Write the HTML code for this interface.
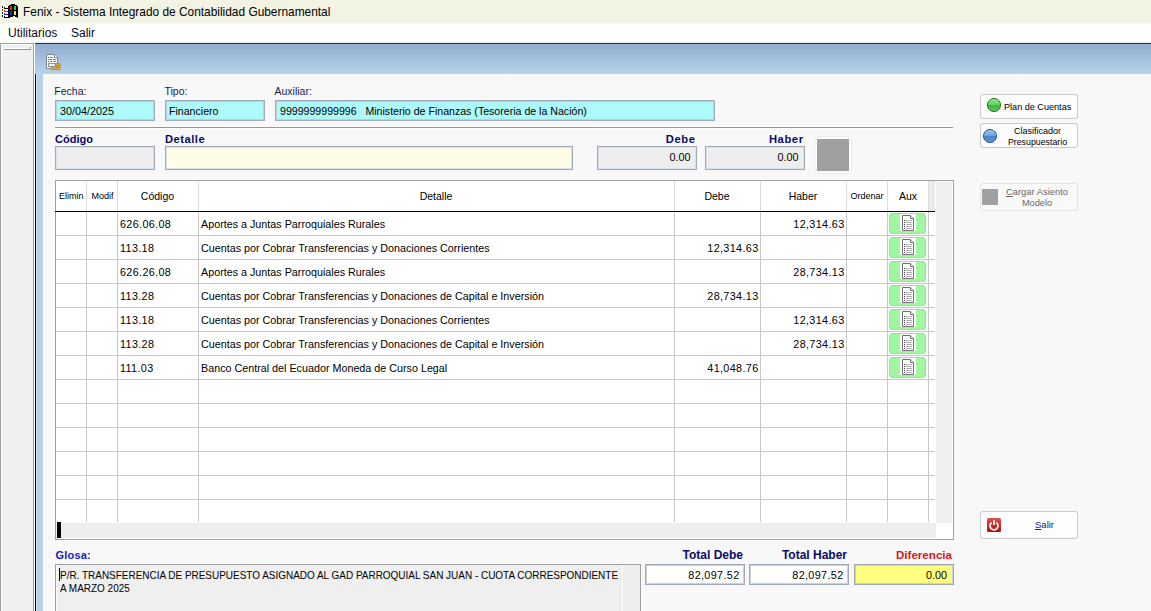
<!DOCTYPE html>
<html><head><meta charset="utf-8">
<style>
html,body{margin:0;padding:0;}
body{width:1151px;height:611px;overflow:hidden;position:relative;background:#F8F8F8;font-family:"Liberation Sans", sans-serif;}
.r{position:absolute;}
.t{position:absolute;white-space:pre;}
</style></head><body>
<div class="r" style="left:0px;top:0px;width:1151px;height:23px;background:#F2F3E3;"></div>
<div class="r" style="left:0px;top:17px;width:1151px;height:1px;background:#F4F5E8;"></div>
<svg class="r" style="left:0px;top:0px" width="22" height="22" viewBox="0 0 22 22" shape-rendering="crispEdges">
<path d="M8 6h1v-1h2v-1h4v1h2v1h1v12h-1v-1h-2v-1h-2v1h-3v1h-2z" fill="#000"/>
<rect x="10" y="6" width="2" height="4" fill="#E02020"/>
<rect x="14" y="6" width="2" height="4" fill="#30D040"/>
<rect x="10" y="11" width="2" height="4" fill="#1020E0"/>
<rect x="14" y="11" width="2" height="4" fill="#F0F040"/>
<rect x="12" y="9" width="2" height="2" fill="#000"/>
<rect x="2" y="6" width="1" height="2" fill="#000"/>
<rect x="2" y="9" width="1" height="2" fill="#7A3A20"/>
<rect x="2" y="12" width="1" height="2" fill="#1818A0"/>
<rect x="2" y="15" width="1" height="2" fill="#000"/>
<rect x="3" y="6" width="1" height="11" fill="#FFFFFF"/>
<rect x="4" y="7" width="1" height="2" fill="#000"/><rect x="5" y="8" width="3" height="1" fill="#000"/>
<rect x="4" y="10" width="4" height="2" fill="#FFFFFF"/><rect x="4" y="10" width="1" height="2" fill="#D02020"/><rect x="5" y="11" width="3" height="1" fill="#E02020"/>
<rect x="4" y="13" width="4" height="2" fill="#FFFFFF"/><rect x="4" y="13" width="1" height="2" fill="#1818C0"/><rect x="5" y="14" width="3" height="1" fill="#1020E0"/>
<rect x="4" y="16" width="4" height="2" fill="#FFFFFF"/><rect x="4" y="16" width="1" height="2" fill="#000"/><rect x="5" y="17" width="3" height="1" fill="#000"/>
</svg>
<div class="t" style="left:23px;top:6.93px;font-size:11.9px;line-height:11.9px;color:#000;">Fenix - Sistema Integrado de Contabilidad Gubernamental</div>
<div class="r" style="left:0px;top:23px;width:1151px;height:20px;background:#FEFEFE;"></div>
<div class="r" style="left:35px;top:42px;width:1116px;height:1px;background:#E6E8EA;"></div>
<div class="t" style="left:8px;top:26.84px;font-size:12px;line-height:12px;color:#0A0A20;">Utilitarios</div>
<div class="t" style="left:71px;top:26.84px;font-size:12px;line-height:12px;color:#0A0A20;">Salir</div>
<div class="r" style="left:0px;top:43px;width:35px;height:568px;background:#F0F0F0;"></div>
<div class="r" style="left:0px;top:43px;width:1px;height:568px;background:#A0A0A0;"></div>
<div class="r" style="left:1px;top:44px;width:1px;height:567px;background:#FFFFFF;"></div>
<div class="r" style="left:0px;top:43px;width:34px;height:1px;background:#A0A0A0;"></div>
<div class="r" style="left:1px;top:44px;width:32px;height:1px;background:#FFFFFF;"></div>
<div class="r" style="left:33px;top:43px;width:1px;height:568px;background:#A0A0A0;"></div>
<div class="r" style="left:34px;top:43px;width:1px;height:568px;background:#FFFFFF;"></div>
<div class="r" style="left:4px;top:48px;width:27px;height:1px;background:#FFFFFF;"></div>
<div class="r" style="left:4px;top:49px;width:27px;height:1px;background:#9A9A9A;"></div>
<div class="r" style="left:30px;top:47px;width:1px;height:3px;background:#9A9A9A;"></div>
<div class="r" style="left:35px;top:43px;width:1116px;height:1px;background:#2A323C;"></div>
<div class="r" style="left:35px;top:44px;width:1116px;height:30px;background:linear-gradient(#92ADCD,#B6D3EB);"></div>
<div class="r" style="left:35px;top:74px;width:1px;height:537px;background:#000;"></div>
<div class="r" style="left:36px;top:74px;width:7px;height:537px;background:#B8D0E8;"></div>
<div class="r" style="left:36px;top:74px;width:1px;height:537px;background:#D8E6F4;"></div>
<div class="r" style="left:43px;top:74px;width:1108px;height:537px;background:#F8F8F8;"></div>
<svg class="r" style="left:45px;top:53px" width="17" height="18" viewBox="0 0 17 18">
<path d="M1.5 1.5h8l3 3v11h-11z" fill="#F4F6F8" stroke="#7C8894" stroke-width="1"/>
<path d="M9.5 1.5v3h3" fill="#fff" stroke="#7C8894" stroke-width="1"/>
<rect x="3" y="4" width="1" height="1" fill="#555"/><rect x="5" y="4" width="3" height="1" fill="#888"/>
<rect x="3" y="6" width="4" height="1" fill="#888"/><rect x="8" y="6" width="3" height="1" fill="#888"/>
<rect x="3" y="8" width="1" height="1" fill="#555"/><rect x="5" y="8" width="2" height="1" fill="#888"/><rect x="8" y="8" width="3" height="1" fill="#888"/>
<rect x="3.5" y="10.5" width="7" height="3" fill="#E8ECEF" stroke="#8A96A0" stroke-width="1"/>
<ellipse cx="13" cy="11.5" rx="2.5" ry="1.2" fill="#D8B050" stroke="#9A7020" stroke-width="0.6"/>
<ellipse cx="13" cy="13.5" rx="2.5" ry="1.2" fill="#D8B050" stroke="#9A7020" stroke-width="0.6"/>
<ellipse cx="13" cy="15.5" rx="2.5" ry="1.2" fill="#D8B050" stroke="#9A7020" stroke-width="0.6"/>
<ellipse cx="8" cy="15.5" rx="2.5" ry="1.2" fill="#D8B050" stroke="#9A7020" stroke-width="0.6"/>
</svg>
<div class="t" style="left:54.3px;top:86.11px;font-size:10.5px;line-height:10.5px;color:#181C54;">Fecha:</div>
<div class="t" style="left:164.5px;top:86.11px;font-size:10.5px;line-height:10.5px;color:#181C54;">Tipo:</div>
<div class="t" style="left:274.5px;top:86.11px;font-size:10.5px;line-height:10.5px;color:#181C54;">Auxiliar:</div>
<div class="r" style="left:55px;top:100px;width:100px;height:21px;background:#AEFAFA;box-shadow:inset 0 0 0 1px #A0A9B6,inset 0 0 0 2px #C3CDD8;"></div>
<div class="r" style="left:165px;top:100px;width:100px;height:21px;background:#AEFAFA;box-shadow:inset 0 0 0 1px #A0A9B6,inset 0 0 0 2px #C3CDD8;"></div>
<div class="r" style="left:275px;top:100px;width:440px;height:21px;background:#AEFAFA;box-shadow:inset 0 0 0 1px #A0A9B6,inset 0 0 0 2px #C3CDD8;"></div>
<div class="t" style="left:60px;top:105.86px;font-size:10.8px;line-height:10.8px;color:#000;">30/04/2025</div>
<div class="t" style="left:169px;top:106.03px;font-size:10.6px;line-height:10.6px;color:#000;">Financiero</div>
<div class="t" style="left:280px;top:106.03px;font-size:10.6px;line-height:10.6px;color:#000;">9999999999996&nbsp;&nbsp;&nbsp;Ministerio de Finanzas (Tesoreria de la Nación)</div>
<div class="r" style="left:55px;top:126px;width:898px;height:1px;background:#FFFFFF;"></div>
<div class="r" style="left:55px;top:127px;width:898px;height:1px;background:#979797;"></div>
<div class="r" style="left:55px;top:128px;width:898px;height:1px;background:#FFFFFF;"></div>
<div class="t" style="left:55px;top:133.69px;font-size:11px;line-height:11px;color:#0A0A6C;font-weight:700;">Código</div>
<div class="t" style="left:165px;top:133.52px;font-size:11.2px;line-height:11.2px;color:#0A0A6C;font-weight:700;letter-spacing:0.5px;">Detalle</div>
<div class="t" style="right:455.4px;top:133.52px;font-size:11.2px;line-height:11.2px;color:#0A0A6C;text-align:right;font-weight:700;letter-spacing:0.6px;">Debe</div>
<div class="t" style="right:347.4px;top:133.52px;font-size:11.2px;line-height:11.2px;color:#0A0A6C;text-align:right;font-weight:700;letter-spacing:0.6px;">Haber</div>
<div class="r" style="left:55px;top:146px;width:100px;height:24px;background:#EEEEEE;box-shadow:inset 0 0 0 1px #A0A9B6,inset 0 0 0 2px #D8E2EE;"></div>
<div class="r" style="left:165px;top:146px;width:408px;height:24px;background:#FFFDE8;box-shadow:inset 0 0 0 1px #A0A9B6,inset 0 0 0 2px #D8E2EE;"></div>
<div class="r" style="left:597px;top:146px;width:100px;height:24px;background:#EEEEEE;box-shadow:inset 0 0 0 1px #A0A9B6,inset 0 0 0 2px #D8E2EE;"></div>
<div class="r" style="left:705px;top:146px;width:100px;height:24px;background:#EEEEEE;box-shadow:inset 0 0 0 1px #A0A9B6,inset 0 0 0 2px #D8E2EE;"></div>
<div class="t" style="right:460.5px;top:152.36px;font-size:10.8px;line-height:10.8px;color:#000;text-align:right;">0.00</div>
<div class="t" style="right:352.5px;top:152.36px;font-size:10.8px;line-height:10.8px;color:#000;text-align:right;">0.00</div>
<div class="r" style="left:815px;top:137px;width:36px;height:36px;background:#FCFCFC;border-radius:3px;box-shadow:0 0 0 1px #EDEDED;"></div>
<div class="r" style="left:817px;top:139px;width:32px;height:32px;background:#A0A0A0;"></div>
<div class="r" style="left:55px;top:180px;width:899px;height:360px;background:#FFFFFF;box-shadow:inset 0 0 0 1px #A0A0A0;"></div>
<div class="r" style="left:86px;top:181px;width:1px;height:30px;background:#DEDEDE;"></div>
<div class="r" style="left:117px;top:181px;width:1px;height:30px;background:#DEDEDE;"></div>
<div class="r" style="left:198px;top:181px;width:1px;height:30px;background:#DEDEDE;"></div>
<div class="r" style="left:674px;top:181px;width:1px;height:30px;background:#DEDEDE;"></div>
<div class="r" style="left:760px;top:181px;width:1px;height:30px;background:#DEDEDE;"></div>
<div class="r" style="left:846px;top:181px;width:1px;height:30px;background:#DEDEDE;"></div>
<div class="r" style="left:887px;top:181px;width:1px;height:30px;background:#DEDEDE;"></div>
<div class="r" style="left:928px;top:181px;width:1px;height:30px;background:#DEDEDE;"></div>
<div class="r" style="left:929px;top:181px;width:6px;height:30px;background:#EBEBEB;"></div>
<div class="r" style="left:55px;top:211px;width:880px;height:1px;background:#000;"></div>
<div class="r" style="left:936px;top:182px;width:16px;height:341px;background:#EFEFEF;"></div>
<div class="r" style="left:56px;top:235px;width:879px;height:1px;background:#C8C8C8;"></div>
<div class="r" style="left:56px;top:259px;width:879px;height:1px;background:#C8C8C8;"></div>
<div class="r" style="left:56px;top:283px;width:879px;height:1px;background:#C8C8C8;"></div>
<div class="r" style="left:56px;top:307px;width:879px;height:1px;background:#C8C8C8;"></div>
<div class="r" style="left:56px;top:331px;width:879px;height:1px;background:#C8C8C8;"></div>
<div class="r" style="left:56px;top:355px;width:879px;height:1px;background:#C8C8C8;"></div>
<div class="r" style="left:56px;top:379px;width:879px;height:1px;background:#C8C8C8;"></div>
<div class="r" style="left:56px;top:403px;width:879px;height:1px;background:#C8C8C8;"></div>
<div class="r" style="left:56px;top:427px;width:879px;height:1px;background:#C8C8C8;"></div>
<div class="r" style="left:56px;top:451px;width:879px;height:1px;background:#C8C8C8;"></div>
<div class="r" style="left:56px;top:475px;width:879px;height:1px;background:#C8C8C8;"></div>
<div class="r" style="left:56px;top:499px;width:879px;height:1px;background:#C8C8C8;"></div>
<div class="r" style="left:86px;top:212px;width:1px;height:310px;background:#C8C8C8;"></div>
<div class="r" style="left:117px;top:212px;width:1px;height:310px;background:#C8C8C8;"></div>
<div class="r" style="left:198px;top:212px;width:1px;height:310px;background:#C8C8C8;"></div>
<div class="r" style="left:674px;top:212px;width:1px;height:310px;background:#C8C8C8;"></div>
<div class="r" style="left:760px;top:212px;width:1px;height:310px;background:#C8C8C8;"></div>
<div class="r" style="left:846px;top:212px;width:1px;height:310px;background:#C8C8C8;"></div>
<div class="r" style="left:887px;top:212px;width:1px;height:310px;background:#C8C8C8;"></div>
<div class="r" style="left:928px;top:212px;width:1px;height:310px;background:#C8C8C8;"></div>
<div class="r" style="left:56px;top:523px;width:880px;height:15px;background:#EEEEEE;"></div>
<div class="r" style="left:57px;top:522px;width:4px;height:16px;background:#000;"></div>
<div class="t" style="left:59px;top:191.88px;font-size:9px;line-height:9px;color:#000;">Elimin</div>
<div class="t" style="left:91.5px;top:191.88px;font-size:9px;line-height:9px;color:#000;">Modif</div>
<div class="t" style="left:117.5px;width:80px;top:191.11px;font-size:10.5px;line-height:10.5px;color:#000;text-align:center;">Código</div>
<div class="t" style="left:336.0px;width:200px;top:191.11px;font-size:10.5px;line-height:10.5px;color:#000;text-align:center;">Detalle</div>
<div class="t" style="left:677.0px;width:80px;top:191.11px;font-size:10.5px;line-height:10.5px;color:#000;text-align:center;">Debe</div>
<div class="t" style="left:763.0px;width:80px;top:191.11px;font-size:10.5px;line-height:10.5px;color:#000;text-align:center;">Haber</div>
<div class="t" style="left:850.5px;top:191.88px;font-size:9px;line-height:9px;color:#000;">Ordenar</div>
<div class="t" style="left:888.0px;width:40px;top:191.11px;font-size:10.5px;line-height:10.5px;color:#000;text-align:center;">Aux</div>
<div class="t" style="left:120px;top:218.86px;font-size:10.8px;line-height:10.8px;color:#000;letter-spacing:0.35px;">626.06.08</div>
<div class="t" style="left:201px;top:218.90px;font-size:10.75px;line-height:10.75px;color:#000;">Aportes a Juntas Parroquiales Rurales</div>
<div class="t" style="right:306.5px;top:218.86px;font-size:10.8px;line-height:10.8px;color:#000;text-align:right;letter-spacing:0.35px;">12,314.63</div>
<div class="r" style="left:889px;top:213px;width:37px;height:21px;background:#A0F7A0;border-radius:4px;box-shadow:inset 0 0 0 1px #92E892;"></div>
<svg class="r" style="left:900px;top:214px" width="16" height="17" viewBox="0 0 16 17">
<rect x="0" y="0" width="16" height="17" fill="#FFFFFF"/>
<path d="M2.5 1.5h8l3 3v12h-11z" fill="#FFFFFF" stroke="#707070" stroke-width="1"/>
<path d="M10.5 1.5v3h3" fill="#F0F0F0" stroke="#707070" stroke-width="1"/>
<rect x="4" y="6" width="1" height="1" fill="#404040"/><rect x="6" y="6" width="6" height="1" fill="#B0B0B0"/>
<rect x="4" y="8" width="1" height="1" fill="#404040"/><rect x="6" y="8" width="6" height="1" fill="#B0B0B0"/>
<rect x="4" y="10" width="1" height="1" fill="#404040"/><rect x="6" y="10" width="6" height="1" fill="#B0B0B0"/>
<rect x="4" y="12" width="1" height="1" fill="#404040"/><rect x="6" y="12" width="6" height="1" fill="#B0B0B0"/>
<rect x="4" y="14" width="1" height="1" fill="#404040"/><rect x="6" y="14" width="6" height="1" fill="#B0B0B0"/>
</svg>
<div class="t" style="left:120px;top:242.86px;font-size:10.8px;line-height:10.8px;color:#000;letter-spacing:0.35px;">113.18</div>
<div class="t" style="left:201px;top:242.90px;font-size:10.75px;line-height:10.75px;color:#000;">Cuentas por Cobrar Transferencias y Donaciones Corrientes</div>
<div class="t" style="right:392.5px;top:242.86px;font-size:10.8px;line-height:10.8px;color:#000;text-align:right;letter-spacing:0.35px;">12,314.63</div>
<div class="r" style="left:889px;top:237px;width:37px;height:21px;background:#A0F7A0;border-radius:4px;box-shadow:inset 0 0 0 1px #92E892;"></div>
<svg class="r" style="left:900px;top:238px" width="16" height="17" viewBox="0 0 16 17">
<rect x="0" y="0" width="16" height="17" fill="#FFFFFF"/>
<path d="M2.5 1.5h8l3 3v12h-11z" fill="#FFFFFF" stroke="#707070" stroke-width="1"/>
<path d="M10.5 1.5v3h3" fill="#F0F0F0" stroke="#707070" stroke-width="1"/>
<rect x="4" y="6" width="1" height="1" fill="#404040"/><rect x="6" y="6" width="6" height="1" fill="#B0B0B0"/>
<rect x="4" y="8" width="1" height="1" fill="#404040"/><rect x="6" y="8" width="6" height="1" fill="#B0B0B0"/>
<rect x="4" y="10" width="1" height="1" fill="#404040"/><rect x="6" y="10" width="6" height="1" fill="#B0B0B0"/>
<rect x="4" y="12" width="1" height="1" fill="#404040"/><rect x="6" y="12" width="6" height="1" fill="#B0B0B0"/>
<rect x="4" y="14" width="1" height="1" fill="#404040"/><rect x="6" y="14" width="6" height="1" fill="#B0B0B0"/>
</svg>
<div class="t" style="left:120px;top:266.86px;font-size:10.8px;line-height:10.8px;color:#000;letter-spacing:0.35px;">626.26.08</div>
<div class="t" style="left:201px;top:266.90px;font-size:10.75px;line-height:10.75px;color:#000;">Aportes a Juntas Parroquiales Rurales</div>
<div class="t" style="right:306.5px;top:266.86px;font-size:10.8px;line-height:10.8px;color:#000;text-align:right;letter-spacing:0.35px;">28,734.13</div>
<div class="r" style="left:889px;top:261px;width:37px;height:21px;background:#A0F7A0;border-radius:4px;box-shadow:inset 0 0 0 1px #92E892;"></div>
<svg class="r" style="left:900px;top:262px" width="16" height="17" viewBox="0 0 16 17">
<rect x="0" y="0" width="16" height="17" fill="#FFFFFF"/>
<path d="M2.5 1.5h8l3 3v12h-11z" fill="#FFFFFF" stroke="#707070" stroke-width="1"/>
<path d="M10.5 1.5v3h3" fill="#F0F0F0" stroke="#707070" stroke-width="1"/>
<rect x="4" y="6" width="1" height="1" fill="#404040"/><rect x="6" y="6" width="6" height="1" fill="#B0B0B0"/>
<rect x="4" y="8" width="1" height="1" fill="#404040"/><rect x="6" y="8" width="6" height="1" fill="#B0B0B0"/>
<rect x="4" y="10" width="1" height="1" fill="#404040"/><rect x="6" y="10" width="6" height="1" fill="#B0B0B0"/>
<rect x="4" y="12" width="1" height="1" fill="#404040"/><rect x="6" y="12" width="6" height="1" fill="#B0B0B0"/>
<rect x="4" y="14" width="1" height="1" fill="#404040"/><rect x="6" y="14" width="6" height="1" fill="#B0B0B0"/>
</svg>
<div class="t" style="left:120px;top:290.86px;font-size:10.8px;line-height:10.8px;color:#000;letter-spacing:0.35px;">113.28</div>
<div class="t" style="left:201px;top:290.90px;font-size:10.75px;line-height:10.75px;color:#000;">Cuentas por Cobrar Transferencias y Donaciones de Capital e Inversión</div>
<div class="t" style="right:392.5px;top:290.86px;font-size:10.8px;line-height:10.8px;color:#000;text-align:right;letter-spacing:0.35px;">28,734.13</div>
<div class="r" style="left:889px;top:285px;width:37px;height:21px;background:#A0F7A0;border-radius:4px;box-shadow:inset 0 0 0 1px #92E892;"></div>
<svg class="r" style="left:900px;top:286px" width="16" height="17" viewBox="0 0 16 17">
<rect x="0" y="0" width="16" height="17" fill="#FFFFFF"/>
<path d="M2.5 1.5h8l3 3v12h-11z" fill="#FFFFFF" stroke="#707070" stroke-width="1"/>
<path d="M10.5 1.5v3h3" fill="#F0F0F0" stroke="#707070" stroke-width="1"/>
<rect x="4" y="6" width="1" height="1" fill="#404040"/><rect x="6" y="6" width="6" height="1" fill="#B0B0B0"/>
<rect x="4" y="8" width="1" height="1" fill="#404040"/><rect x="6" y="8" width="6" height="1" fill="#B0B0B0"/>
<rect x="4" y="10" width="1" height="1" fill="#404040"/><rect x="6" y="10" width="6" height="1" fill="#B0B0B0"/>
<rect x="4" y="12" width="1" height="1" fill="#404040"/><rect x="6" y="12" width="6" height="1" fill="#B0B0B0"/>
<rect x="4" y="14" width="1" height="1" fill="#404040"/><rect x="6" y="14" width="6" height="1" fill="#B0B0B0"/>
</svg>
<div class="t" style="left:120px;top:314.86px;font-size:10.8px;line-height:10.8px;color:#000;letter-spacing:0.35px;">113.18</div>
<div class="t" style="left:201px;top:314.90px;font-size:10.75px;line-height:10.75px;color:#000;">Cuentas por Cobrar Transferencias y Donaciones Corrientes</div>
<div class="t" style="right:306.5px;top:314.86px;font-size:10.8px;line-height:10.8px;color:#000;text-align:right;letter-spacing:0.35px;">12,314.63</div>
<div class="r" style="left:889px;top:309px;width:37px;height:21px;background:#A0F7A0;border-radius:4px;box-shadow:inset 0 0 0 1px #92E892;"></div>
<svg class="r" style="left:900px;top:310px" width="16" height="17" viewBox="0 0 16 17">
<rect x="0" y="0" width="16" height="17" fill="#FFFFFF"/>
<path d="M2.5 1.5h8l3 3v12h-11z" fill="#FFFFFF" stroke="#707070" stroke-width="1"/>
<path d="M10.5 1.5v3h3" fill="#F0F0F0" stroke="#707070" stroke-width="1"/>
<rect x="4" y="6" width="1" height="1" fill="#404040"/><rect x="6" y="6" width="6" height="1" fill="#B0B0B0"/>
<rect x="4" y="8" width="1" height="1" fill="#404040"/><rect x="6" y="8" width="6" height="1" fill="#B0B0B0"/>
<rect x="4" y="10" width="1" height="1" fill="#404040"/><rect x="6" y="10" width="6" height="1" fill="#B0B0B0"/>
<rect x="4" y="12" width="1" height="1" fill="#404040"/><rect x="6" y="12" width="6" height="1" fill="#B0B0B0"/>
<rect x="4" y="14" width="1" height="1" fill="#404040"/><rect x="6" y="14" width="6" height="1" fill="#B0B0B0"/>
</svg>
<div class="t" style="left:120px;top:338.86px;font-size:10.8px;line-height:10.8px;color:#000;letter-spacing:0.35px;">113.28</div>
<div class="t" style="left:201px;top:338.90px;font-size:10.75px;line-height:10.75px;color:#000;">Cuentas por Cobrar Transferencias y Donaciones de Capital e Inversión</div>
<div class="t" style="right:306.5px;top:338.86px;font-size:10.8px;line-height:10.8px;color:#000;text-align:right;letter-spacing:0.35px;">28,734.13</div>
<div class="r" style="left:889px;top:333px;width:37px;height:21px;background:#A0F7A0;border-radius:4px;box-shadow:inset 0 0 0 1px #92E892;"></div>
<svg class="r" style="left:900px;top:334px" width="16" height="17" viewBox="0 0 16 17">
<rect x="0" y="0" width="16" height="17" fill="#FFFFFF"/>
<path d="M2.5 1.5h8l3 3v12h-11z" fill="#FFFFFF" stroke="#707070" stroke-width="1"/>
<path d="M10.5 1.5v3h3" fill="#F0F0F0" stroke="#707070" stroke-width="1"/>
<rect x="4" y="6" width="1" height="1" fill="#404040"/><rect x="6" y="6" width="6" height="1" fill="#B0B0B0"/>
<rect x="4" y="8" width="1" height="1" fill="#404040"/><rect x="6" y="8" width="6" height="1" fill="#B0B0B0"/>
<rect x="4" y="10" width="1" height="1" fill="#404040"/><rect x="6" y="10" width="6" height="1" fill="#B0B0B0"/>
<rect x="4" y="12" width="1" height="1" fill="#404040"/><rect x="6" y="12" width="6" height="1" fill="#B0B0B0"/>
<rect x="4" y="14" width="1" height="1" fill="#404040"/><rect x="6" y="14" width="6" height="1" fill="#B0B0B0"/>
</svg>
<div class="t" style="left:120px;top:362.86px;font-size:10.8px;line-height:10.8px;color:#000;letter-spacing:0.35px;">111.03</div>
<div class="t" style="left:201px;top:362.90px;font-size:10.75px;line-height:10.75px;color:#000;">Banco Central del Ecuador Moneda de Curso Legal</div>
<div class="t" style="right:392.5px;top:362.86px;font-size:10.8px;line-height:10.8px;color:#000;text-align:right;letter-spacing:0.35px;">41,048.76</div>
<div class="r" style="left:889px;top:357px;width:37px;height:21px;background:#A0F7A0;border-radius:4px;box-shadow:inset 0 0 0 1px #92E892;"></div>
<svg class="r" style="left:900px;top:358px" width="16" height="17" viewBox="0 0 16 17">
<rect x="0" y="0" width="16" height="17" fill="#FFFFFF"/>
<path d="M2.5 1.5h8l3 3v12h-11z" fill="#FFFFFF" stroke="#707070" stroke-width="1"/>
<path d="M10.5 1.5v3h3" fill="#F0F0F0" stroke="#707070" stroke-width="1"/>
<rect x="4" y="6" width="1" height="1" fill="#404040"/><rect x="6" y="6" width="6" height="1" fill="#B0B0B0"/>
<rect x="4" y="8" width="1" height="1" fill="#404040"/><rect x="6" y="8" width="6" height="1" fill="#B0B0B0"/>
<rect x="4" y="10" width="1" height="1" fill="#404040"/><rect x="6" y="10" width="6" height="1" fill="#B0B0B0"/>
<rect x="4" y="12" width="1" height="1" fill="#404040"/><rect x="6" y="12" width="6" height="1" fill="#B0B0B0"/>
<rect x="4" y="14" width="1" height="1" fill="#404040"/><rect x="6" y="14" width="6" height="1" fill="#B0B0B0"/>
</svg>
<div class="t" style="left:55.5px;top:549.69px;font-size:11px;line-height:11px;color:#1818CC;font-weight:700;letter-spacing:0.2px;">Glosa:</div>
<div class="t" style="right:408px;top:548.84px;font-size:12px;line-height:12px;color:#0A0A6C;text-align:right;font-weight:700;">Total Debe</div>
<div class="t" style="right:304px;top:548.84px;font-size:12px;line-height:12px;color:#0A0A6C;text-align:right;font-weight:700;">Total Haber</div>
<div class="t" style="right:199px;top:549.18px;font-size:11.6px;line-height:11.6px;color:#DD1515;text-align:right;font-weight:700;">Diferencia</div>
<div class="r" style="left:55px;top:564px;width:586px;height:60px;background:#EFEFEF;box-shadow:inset 0 0 0 1px #A0A0A0;"></div>
<div class="r" style="left:56px;top:565px;width:1px;height:46px;background:#FFFFFF;"></div>
<div class="r" style="left:622px;top:565px;width:1px;height:46px;background:#FFFFFF;"></div>
<div class="r" style="left:623px;top:565px;width:17px;height:46px;background:#EDEDED;"></div>
<div class="t" style="left:60px;top:570.19px;font-size:11px;line-height:11px;color:#000;transform:scaleX(0.9054);transform-origin:0 0;">P/R. TRANSFERENCIA DE PRESUPUESTO ASIGNADO AL GAD PARROQUIAL SAN JUAN - CUOTA CORRESPONDIENTE</div>
<div class="t" style="left:60px;top:582.69px;font-size:11px;line-height:11px;color:#000;transform:scaleX(0.9054);transform-origin:0 0;">A MARZO 2025</div>
<div class="r" style="left:59px;top:568px;width:1px;height:13px;background:#000;"></div>
<div class="r" style="left:645px;top:564px;width:100px;height:21px;background:#FFFFFF;box-shadow:inset 0 0 0 1px #A0A9B6,inset 0 0 0 2px #C8D2DE;"></div>
<div class="r" style="left:749px;top:564px;width:100px;height:21px;background:#FFFFFF;box-shadow:inset 0 0 0 1px #A0A9B6,inset 0 0 0 2px #C8D2DE;"></div>
<div class="r" style="left:854px;top:564px;width:100px;height:21px;background:#FFFF80;box-shadow:inset 0 0 0 1px #A0A9B6,inset 0 0 0 2px #C8D0D8;"></div>
<div class="t" style="right:411.5px;top:569.86px;font-size:10.8px;line-height:10.8px;color:#000;text-align:right;letter-spacing:0.35px;">82,097.52</div>
<div class="t" style="right:307.5px;top:569.86px;font-size:10.8px;line-height:10.8px;color:#000;text-align:right;letter-spacing:0.35px;">82,097.52</div>
<div class="t" style="right:204px;top:569.86px;font-size:10.8px;line-height:10.8px;color:#000;text-align:right;">0.00</div>
<div class="r" style="left:980px;top:94px;width:98px;height:25px;background:#FDFDFD;border-radius:3px;box-shadow:inset 0 0 0 1px #CACACA;"></div>
<svg class="r" style="left:986px;top:97px" width="16" height="16" viewBox="0 0 16 16">
<defs><linearGradient id="gg" x1="0" y1="0" x2="0" y2="1"><stop offset="0" stop-color="#8CEB8C"/><stop offset="0.5" stop-color="#62CF62"/><stop offset="0.52" stop-color="#3EB43E"/><stop offset="1" stop-color="#5CC85C"/></linearGradient></defs>
<circle cx="8" cy="8" r="6.6" fill="url(#gg)" stroke="#2A7A2A" stroke-width="1"/>
</svg>
<div class="t" style="left:1004px;top:102.70px;font-size:9.1px;line-height:9.1px;color:#000;">Plan de Cuentas</div>
<div class="r" style="left:980px;top:123px;width:98px;height:25px;background:#FDFDFD;border-radius:3px;box-shadow:inset 0 0 0 1px #CACACA;"></div>
<svg class="r" style="left:982px;top:128px" width="16" height="16" viewBox="0 0 16 16">
<defs><linearGradient id="bg" x1="0" y1="0" x2="0" y2="1"><stop offset="0" stop-color="#9CC4F0"/><stop offset="0.5" stop-color="#6FA2DC"/><stop offset="0.52" stop-color="#4A82C4"/><stop offset="1" stop-color="#5E94D2"/></linearGradient></defs>
<circle cx="8" cy="8" r="6.6" fill="url(#bg)" stroke="#30609A" stroke-width="1"/>
</svg>
<div class="t" style="left:997.5px;width:80px;top:127.18px;font-size:9px;line-height:9px;color:#000;text-align:center;">Clasificador</div>
<div class="t" style="left:997.5px;width:80px;top:138.15px;font-size:8.8px;line-height:8.8px;color:#000;text-align:center;">Presupuestario</div>
<div class="r" style="left:980px;top:183px;width:98px;height:28px;background:#F9F9F9;border-radius:3px;box-shadow:inset 0 0 0 1px #E4E4E4;"></div>
<div class="r" style="left:982px;top:189px;width:16px;height:16px;background:#A0A0A0;"></div>
<div class="t" style="left:992.0px;width:90px;top:187.04px;font-size:9.4px;line-height:9.4px;color:#6A6A6A;text-align:center;"><u>C</u>argar Asiento</div>
<div class="t" style="left:997.0px;width:80px;top:199.21px;font-size:9.2px;line-height:9.2px;color:#6A6A6A;text-align:center;">Modelo</div>
<div class="r" style="left:980px;top:511px;width:98px;height:28px;background:#FDFDFD;border-radius:3px;box-shadow:inset 0 0 0 1px #CACACA;"></div>
<svg class="r" style="left:987px;top:518px" width="14" height="14" viewBox="0 0 14 14">
<defs><linearGradient id="rg" x1="0" y1="0" x2="0" y2="1"><stop offset="0" stop-color="#E05050"/><stop offset="1" stop-color="#B01212"/></linearGradient></defs>
<rect x="0" y="0" width="14" height="14" rx="1.5" fill="url(#rg)"/>
<path d="M4.6 4.6 A4 4 0 1 0 9.4 4.6" fill="none" stroke="#FFFFFF" stroke-width="1.7"/>
<line x1="7" y1="2.2" x2="7" y2="7" stroke="#FFFFFF" stroke-width="1.7"/>
</svg>
<div class="t" style="left:1035px;top:520.16px;font-size:9.5px;line-height:9.5px;color:#1A2080;"><u>S</u>alir</div>

</body></html>
